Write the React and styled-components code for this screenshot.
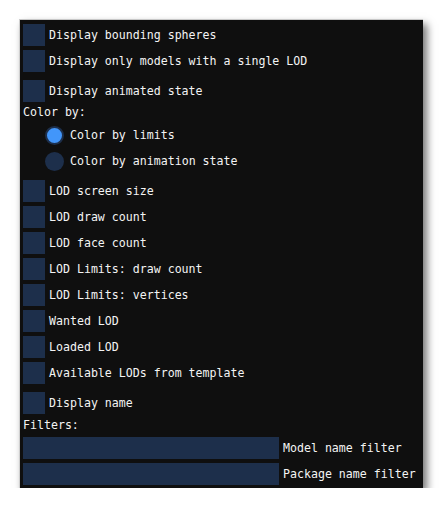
import React from 'react'
import styled, { createGlobalStyle } from 'styled-components'

const GlobalStyle = createGlobalStyle`
  body {
    margin: 0;
    background: #ffffff;
    font-family: "DejaVu Sans Mono", "Liberation Mono", monospace;
  }
`

const Panel = styled.div`
  box-sizing: border-box;
  margin: 19px 0 0 19px;
  width: 404px;
  height: 469px;
  background: #0f0f0f;
  border-top: 1px solid #c8c8c8;
  border-left: 1px solid #d0d0d0;
  box-shadow: 4px 5px 8px rgba(0, 0, 0, 0.55);
  padding: 4px 3px 0;
  display: flex;
  flex-direction: column;
  color: #f4f4f4;
  font-size: 11.6px;
`

const Row = styled.label`
  display: flex;
  flex: none;
  align-items: center;
  height: 22px;
  margin-top: ${p => p.$gap || 0}px;
  padding-left: ${p => p.$indent || 0}px;
  gap: ${p => p.$spacing || 4}px;
  white-space: nowrap;
`

const Box = styled.span`
  width: 22px;
  height: 22px;
  flex: none;
  background: #1d2f4b;
`

const Radio = styled.span`
  box-sizing: border-box;
  width: 19px;
  height: 19px;
  flex: none;
  border-radius: 50%;
  background: ${p => (p.$on ? '#4296fa' : '#1d2f4b')};
  border: ${p => (p.$on ? '2px solid #1d2f4b' : 'none')};
`

const Heading = styled.div`
  flex: none;
  height: 20px;
  line-height: 20px;
  margin-top: ${p => p.$gap || 0}px;
`

const Input = styled.span`
  width: 256px;
  height: 22px;
  flex: none;
  background: #1d2f4b;
`

const checks = [
  'LOD screen size',
  'LOD draw count',
  'LOD face count',
  'LOD Limits: draw count',
  'LOD Limits: vertices',
  'Wanted LOD',
  'Loaded LOD',
  'Available LODs from template',
]

const App = () => (
  <>
    <GlobalStyle />
    <Panel>
      <Row><Box />Display bounding spheres</Row>
      <Row $gap={4}><Box />Display only models with a single LOD</Row>
      <Row $gap={8}><Box />Display animated state</Row>
      <Heading>Color by:</Heading>
      <Row $gap={2} $indent={22} $spacing={6}><Radio $on />Color by limits</Row>
      <Row $gap={4} $indent={22} $spacing={6}><Radio />Color by animation state</Row>
      {checks.map((c, i) => (
        <Row key={c} $gap={i === 0 ? 8 : 4}><Box />{c}</Row>
      ))}
      <Row $gap={8}><Box />Display name</Row>
      <Heading $gap={1}>Filters:</Heading>
      <Row $gap={2}><Input />Model name filter</Row>
      <Row $gap={4}><Input />Package name filter</Row>
    </Panel>
  </>
)

export default App
